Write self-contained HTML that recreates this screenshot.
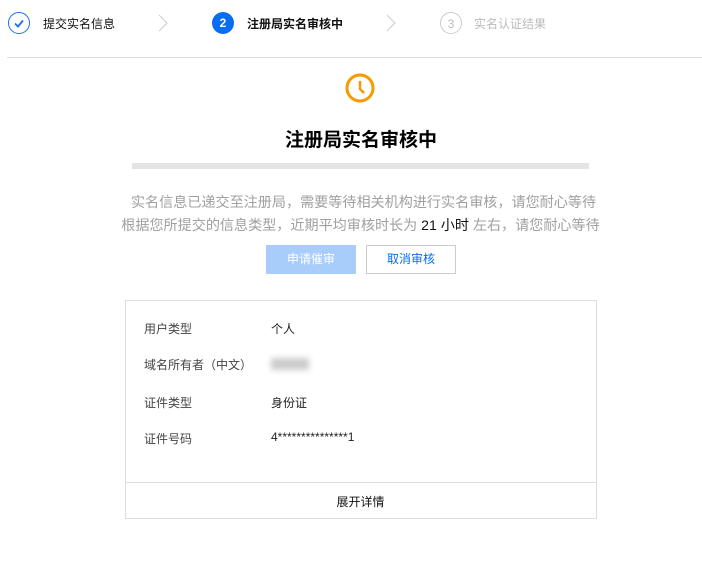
<!DOCTYPE html>
<html><head><meta charset="utf-8"><style>
body{margin:0;width:702px;height:578px;background:#fff;font-family:"Liberation Sans","Noto Sans CJK SC",sans-serif;position:relative;overflow:hidden}
.a{position:absolute;white-space:nowrap}
.circ{position:absolute;width:22px;height:22px;border-radius:50%;box-sizing:border-box;text-align:center;line-height:22px;font-size:12px;font-weight:bold}
.lbl{font-size:12px;color:#444}
.val{font-size:12px;color:#222}
</style></head><body>
<div class="circ" style="left:8px;top:12px;border:1px solid #1a6fef"><svg width="20" height="20" viewBox="0 0 20 20"><path d="M6 10.5l3 3 5-6" fill="none" stroke="#1a6fef" stroke-width="1.8"/></svg></div>
<div class="a" style="left:43px;top:15px;font-size:12px;color:#111">提交实名信息</div>
<svg class="a" style="left:157px;top:13px" width="12" height="20"><path d="M2 2l8 8-8 8" fill="none" stroke="#ccc" stroke-width="1"/></svg>
<div class="circ" style="left:212px;top:12px;background:#0a6cf0;color:#fff">2</div>
<div class="a" style="left:247px;top:15px;font-size:12px;color:#111;font-weight:bold">注册局实名审核中</div>
<svg class="a" style="left:385px;top:13px" width="12" height="20"><path d="M2 2l8 8-8 8" fill="none" stroke="#ccc" stroke-width="1"/></svg>
<div class="circ" style="left:440px;top:12px;border:1px solid #ccc;color:#bbb;font-weight:normal">3</div>
<div class="a" style="left:474px;top:15px;font-size:12px;color:#bbb">实名认证结果</div>
<div class="a" style="left:7px;top:57px;width:695px;height:1px;background:#ddd"></div>
<svg class="a" style="left:344px;top:72px" width="32" height="32" viewBox="0 0 32 32"><circle cx="16" cy="16" r="13" fill="none" stroke="#f59a00" stroke-width="3"/><path d="M16 9v8l4 4" fill="none" stroke="#f59a00" stroke-width="2.5"/></svg>
<div class="a" style="left:0;width:722px;text-align:center;top:125px;font-size:19px;font-weight:bold;color:#000">注册局实名审核中</div>
<div class="a" style="left:132px;top:163px;width:457px;height:6px;background:#e4e4e4"></div>
<div class="a" style="left:0;width:727px;text-align:center;top:192px;font-size:14.1px;color:#a0a0a0">实名信息已递交至注册局，需要等待相关机构进行实名审核，请您耐心等待</div>
<div class="a" style="left:0;width:721px;text-align:center;top:215px;font-size:14.1px;color:#a0a0a0">根据您所提交的信息类型，近期平均审核时长为 <span style="color:#111">21 小时</span> 左右，请您耐心等待</div>
<div class="a" style="left:266px;top:245px;width:90px;height:29px;background:#a8cdfb;color:#fff;font-size:12px;text-align:center;line-height:29px">申请催审</div>
<div class="a" style="left:366px;top:245px;width:88px;height:27px;border:1px solid #ccc;color:#0a6cf0;font-size:12px;text-align:center;line-height:27px">取消审核</div>
<div class="a" style="left:125px;top:300px;width:470px;height:217px;border:1px solid #ddd"></div>
<div class="a" style="left:126px;top:482px;width:470px;height:1px;background:#ddd"></div>
<div class="a lbl" style="left:144px;top:320px">用户类型</div><div class="a val" style="left:271px;top:320px">个人</div>
<div class="a lbl" style="left:144px;top:356px">域名所有者（中文）</div><div class="a" style="left:271px;top:358px;width:38px;height:12px;background:#ccc;filter:blur(3px)"></div>
<div class="a lbl" style="left:144px;top:394px">证件类型</div><div class="a val" style="left:271px;top:394px">身份证</div>
<div class="a lbl" style="left:144px;top:430px">证件号码</div><div class="a val" style="left:271px;top:430px">4***************1</div>
<div class="a" style="left:0;width:721px;text-align:center;top:493px;font-size:12px;color:#111">展开详情</div>
</body></html>
